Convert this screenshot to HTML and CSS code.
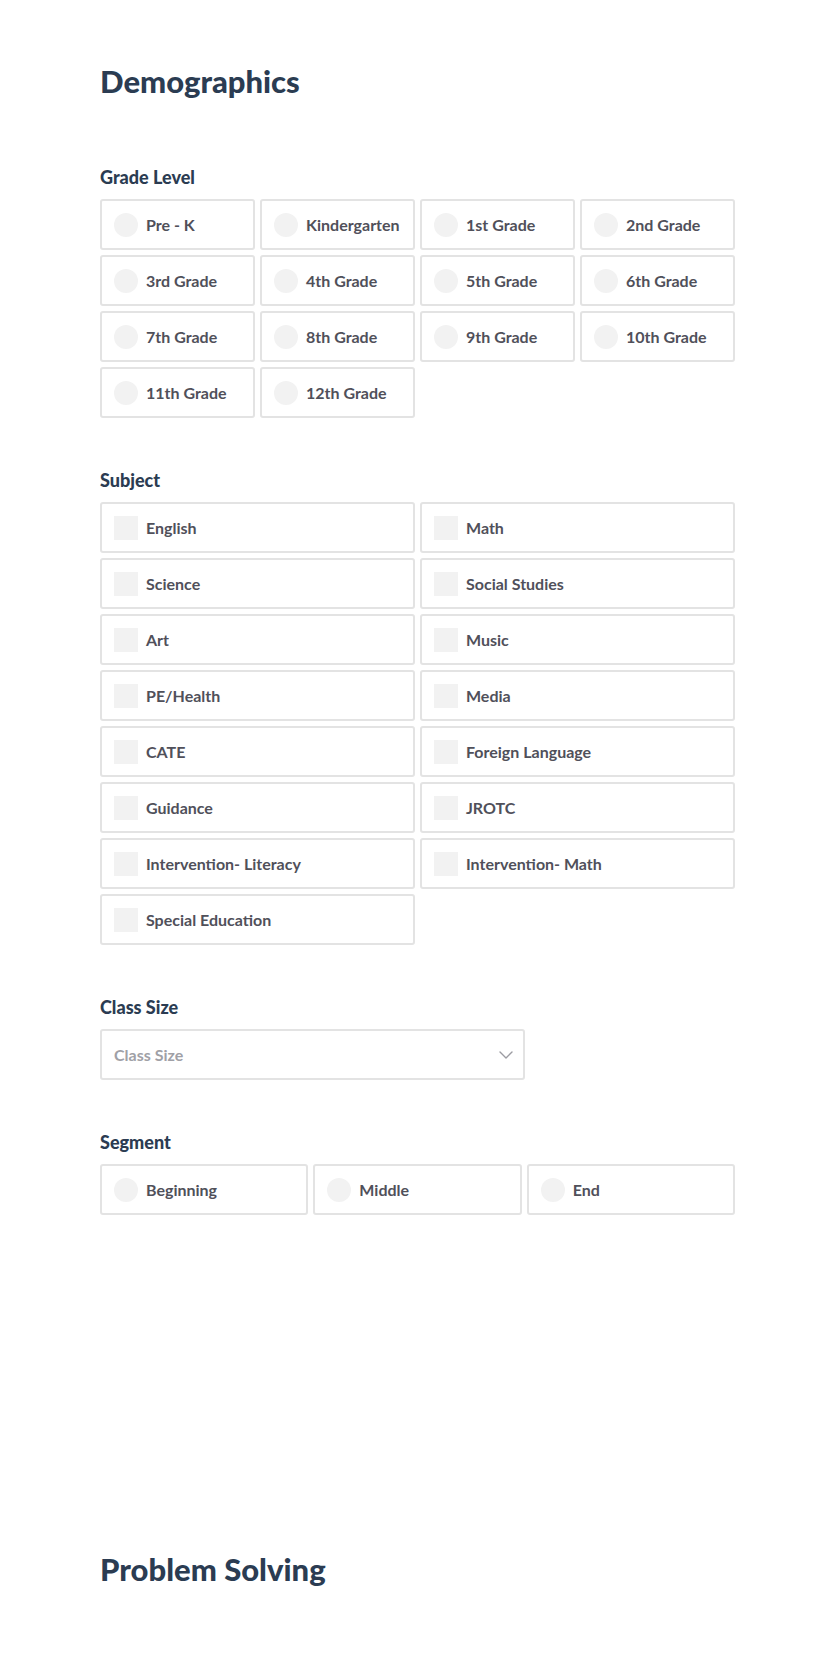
FILE: index.html
```html
<!DOCTYPE html>
<html lang="en">
<head>
<meta charset="utf-8">
<title>Demographics</title>
<link rel="stylesheet" href="styles.css">
</head>
<body>
<main class="page">
  <h1 class="page-title">Demographics</h1>

  <section class="field">
    <h2 class="field-label">Grade Level</h2>
    <div class="options cols-4">
      <label class="option"><span class="radio"></span><span class="option-text">Pre - K</span></label>
      <label class="option"><span class="radio"></span><span class="option-text">Kindergarten</span></label>
      <label class="option"><span class="radio"></span><span class="option-text">1st Grade</span></label>
      <label class="option"><span class="radio"></span><span class="option-text">2nd Grade</span></label>
      <label class="option"><span class="radio"></span><span class="option-text">3rd Grade</span></label>
      <label class="option"><span class="radio"></span><span class="option-text">4th Grade</span></label>
      <label class="option"><span class="radio"></span><span class="option-text">5th Grade</span></label>
      <label class="option"><span class="radio"></span><span class="option-text">6th Grade</span></label>
      <label class="option"><span class="radio"></span><span class="option-text">7th Grade</span></label>
      <label class="option"><span class="radio"></span><span class="option-text">8th Grade</span></label>
      <label class="option"><span class="radio"></span><span class="option-text">9th Grade</span></label>
      <label class="option"><span class="radio"></span><span class="option-text">10th Grade</span></label>
      <label class="option"><span class="radio"></span><span class="option-text">11th Grade</span></label>
      <label class="option"><span class="radio"></span><span class="option-text">12th Grade</span></label>
    </div>
  </section>

  <section class="field">
    <h2 class="field-label">Subject</h2>
    <div class="options cols-2">
      <label class="option"><span class="check"></span><span class="option-text">English</span></label>
      <label class="option"><span class="check"></span><span class="option-text">Math</span></label>
      <label class="option"><span class="check"></span><span class="option-text">Science</span></label>
      <label class="option"><span class="check"></span><span class="option-text">Social Studies</span></label>
      <label class="option"><span class="check"></span><span class="option-text">Art</span></label>
      <label class="option"><span class="check"></span><span class="option-text">Music</span></label>
      <label class="option"><span class="check"></span><span class="option-text">PE/Health</span></label>
      <label class="option"><span class="check"></span><span class="option-text">Media</span></label>
      <label class="option"><span class="check"></span><span class="option-text">CATE</span></label>
      <label class="option"><span class="check"></span><span class="option-text">Foreign Language</span></label>
      <label class="option"><span class="check"></span><span class="option-text">Guidance</span></label>
      <label class="option"><span class="check"></span><span class="option-text">JROTC</span></label>
      <label class="option"><span class="check"></span><span class="option-text">Intervention- Literacy</span></label>
      <label class="option"><span class="check"></span><span class="option-text">Intervention- Math</span></label>
      <label class="option"><span class="check"></span><span class="option-text">Special Education</span></label>
    </div>
  </section>

  <section class="field">
    <h2 class="field-label">Class Size</h2>
    <div class="select">
      <span class="select-placeholder">Class Size</span>
      <svg class="chevron" width="14" height="8" viewBox="0 0 14 8" aria-hidden="true">
        <polyline points="1,1 7,7 13,1" fill="none" stroke="#9c9ca2" stroke-width="1.4" stroke-linecap="round" stroke-linejoin="round"/>
      </svg>
    </div>
  </section>

  <section class="field">
    <h2 class="field-label">Segment</h2>
    <div class="options cols-3">
      <label class="option"><span class="radio"></span><span class="option-text">Beginning</span></label>
      <label class="option"><span class="radio"></span><span class="option-text">Middle</span></label>
      <label class="option"><span class="radio"></span><span class="option-text">End</span></label>
    </div>
  </section>

  <h1 class="page-title next-title">Problem Solving</h1>
</main>
</body>
</html>
```

FILE: styles.css
```css
* {
  box-sizing: border-box;
}

html, body {
  margin: 0;
  padding: 0;
  background: #ffffff;
}

body {
  font-family: Lato, "Open Sans", "Liberation Sans", sans-serif;
}

.page {
  width: 635px;
  margin-left: 100px;
  padding-top: 62px;
  padding-bottom: 60px;
}

.page-title {
  margin: 0 0 66px 0;
  font-size: 31px;
  line-height: 38px;
  font-weight: 900;
  color: #2b3c52;
}

.next-title {
  margin-top: 335px;
}

.field {
  margin-top: 51px;
}

.field-label {
  margin: 0 0 11px 0;
  font-size: 18px;
  line-height: 22px;
  font-weight: 900;
  color: #2b3c52;
}

.options {
  display: grid;
  gap: 5px;
}

.cols-4 {
  grid-template-columns: repeat(4, 1fr);
}

.cols-3 {
  grid-template-columns: repeat(3, 1fr);
}

.cols-2 {
  grid-template-columns: repeat(2, 1fr);
}

.option {
  display: flex;
  align-items: center;
  gap: 8px;
  height: 51px;
  padding: 0 12px;
  border: 2px solid #e3e3e3;
  border-radius: 3px;
  background: #ffffff;
}

.radio {
  flex: none;
  width: 24px;
  height: 24px;
  border-radius: 50%;
  background: #f2f2f2;
}

.check {
  flex: none;
  width: 24px;
  height: 24px;
  background: #f2f2f2;
}

.option-text {
  font-size: 16px;
  font-weight: 700;
  color: #50505a;
  white-space: nowrap;
}

.select {
  display: flex;
  align-items: center;
  justify-content: space-between;
  width: 425px;
  height: 51px;
  padding: 0 10px 0 12px;
  border: 2px solid #e3e3e3;
  border-radius: 3px;
  background: #ffffff;
}

.select-placeholder {
  font-size: 16px;
  font-weight: 700;
  color: #a0a0a6;
}

.chevron {
  display: block;
  margin-top: 1px;
}
```
